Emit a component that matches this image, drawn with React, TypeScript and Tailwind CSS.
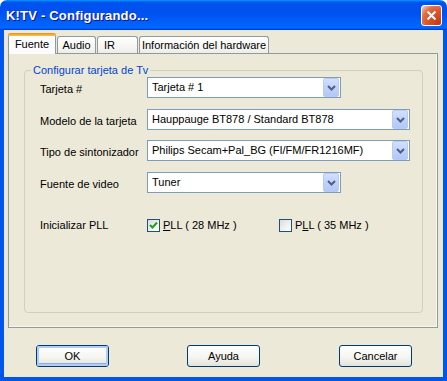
import React from 'react';

const font = "font-['Liberation_Sans',Arial,sans-serif]";

function ComboArrow() {
    return (
        <div className="ml-auto mr-[1px] h-full w-[16px] rounded-[2px] border border-[#B9CBF3] bg-[linear-gradient(180deg,#D3E0FD_0%,#C0D2FB_50%,#B3C8F6_100%)] flex items-center justify-center">
            <svg width="9" height="6" viewBox="0 0 9 6">
                <path d="M1 1 L4.5 4.5 L8 1" fill="none" stroke="#4D6185" strokeWidth="2" />
            </svg>
        </div>
    );
}

function Combo({ value, width }: { value: string; width: string }) {
    return (
        <div className={`${width} h-[21px] border border-[#7F9DB9] bg-white flex items-center`}>
            <span className="pl-[4px] whitespace-nowrap">{value}</span>
            <ComboArrow />
        </div>
    );
}

function Checkbox({ checked }: { checked?: boolean }) {
    return (
        <div className="w-[13px] h-[13px] border border-[#1C5180] bg-[linear-gradient(135deg,#DCDCD7_0%,#F2F2EE_60%,#FFFFFF_100%)] flex items-center justify-center">
            {checked && (
                <svg width="9" height="9" viewBox="0 0 9 9">
                    <path d="M1 4 L3.5 6.5 L8 1.5" fill="none" stroke="#21A121" strokeWidth="2" />
                </svg>
            )}
        </div>
    );
}

function Button({ label, focused }: { label: string; focused?: boolean }) {
    return (
        <div className="w-[73px] h-[22px] rounded-[3px] border border-[#003C74] bg-[linear-gradient(180deg,#FFFFFF_0%,#F4F4F0_60%,#E3E2DA_100%)] flex items-center justify-center">
            <div
                className={`w-full h-full rounded-[2px] flex items-center justify-center ${
                    focused ? 'shadow-[inset_0_0_0_2px_#B3CCF5,inset_0_-1px_0_2px_#8AABE3]' : ''
                }`}
            >
                {label}
            </div>
        </div>
    );
}

const rows = [
    { label: 'Tarjeta #', value: 'Tarjeta # 1', width: 'w-[194px]', mt: 'mt-0' },
    { label: 'Modelo de la tarjeta', value: 'Hauppauge BT878 / Standard BT878', width: 'w-[263px]', mt: 'mt-[11px]' },
    { label: 'Tipo de sintonizador', value: 'Philips Secam+Pal_BG (FI/FM/FR1216MF)', width: 'w-[263px]', mt: 'mt-[10px]' },
    { label: 'Fuente de video', value: 'Tuner', width: 'w-[194px]', mt: 'mt-[11px]' },
];

export default function App() {
    return (
        <div className={`w-[447px] h-[381px] flex flex-col bg-white text-[11px] leading-[13px] text-black ${font}`}>
            {/* Title bar */}
            <div className="h-[30px] shrink-0 rounded-t-[7px] bg-[linear-gradient(180deg,#0997FF,#0053EE_8%,#0050EE_40%,#0066FF_88%,#0066FF_93%,#005BFF_95%,#003DD7_96%,#003DD7)] flex items-center pl-[6px] pr-[5px]">
                <span className="text-white font-bold text-[13px] tracking-[0.2px] [text-shadow:1px_1px_#0F1089]">
                    K!TV - Configurando...
                </span>
                <div className="ml-auto w-[21px] h-[21px] rounded-[3px] border border-white bg-[radial-gradient(circle_at_90%_90%,#C23A10_0%,#DD5A30_55%,#E2704A_72%,#F4B8A2_92%,#FFFFFF_100%)] flex items-center justify-center">
                    <svg width="11" height="11" viewBox="0 0 11 11">
                        <path d="M1.5 1.5 L9.5 9.5 M9.5 1.5 L1.5 9.5" stroke="white" strokeWidth="2" />
                    </svg>
                </div>
            </div>

            {/* Body */}
            <div className="flex-1 flex flex-col bg-[#ECE9D8] border-x-4 border-b-4 border-[#0055EA] pt-[3px] pl-[4px]">
                {/* Tabs */}
                <div className="flex items-end h-[21px]">
                    <div className="relative z-10 w-[48px] h-[21px] rounded-t-[3px] border-x border-[#919B9C] bg-[#FCFCFE] flex flex-col">
                        <div className="h-[3px] rounded-t-[3px] bg-[linear-gradient(180deg,#E68B2C,#FFC73C)] -mx-[1px]" />
                        <div className="flex-1 flex items-center justify-center pb-[2px]">Fuente</div>
                    </div>
                    <div className="ml-[1px] w-[39px] h-[18px] rounded-t-[3px] border-x border-t border-[#919B9C] bg-[linear-gradient(180deg,#FFFFFF,#F3F3EF_70%,#ECEBE5)] flex items-center justify-center pb-[1px]">
                        Audio
                    </div>
                    <div className="ml-[1px] w-[41px] h-[18px] rounded-t-[3px] border-x border-t border-[#919B9C] bg-[linear-gradient(180deg,#FFFFFF,#F3F3EF_70%,#ECEBE5)] flex items-center pl-[6px] pb-[1px]">
                        IR
                    </div>
                    <div className="ml-[1px] w-[130px] h-[18px] rounded-t-[3px] border-x border-t border-[#919B9C] bg-[linear-gradient(180deg,#FFFFFF,#F3F3EF_70%,#ECEBE5)] flex items-center justify-center pb-[1px]">
                        Información del hardware
                    </div>
                </div>

                {/* Panel */}
                <div className="-mt-[1px] w-[430px] h-[275px] border border-[#919B9C] bg-[#ECE9D8] shadow-[inset_-1px_-1px_0_#F7F6F0]">
                    <fieldset className="ml-[15px] mt-[10px] w-[399px] h-[249px] rounded-[4px] border border-[#D0D0BF] pl-[6px]">
                        <legend className="px-[2px] text-[#0046D5] leading-[13px]">Configurar tarjeta de Tv</legend>
                        <div className="pl-[9px] flex flex-col">
                            {rows.map(r => (
                                <div key={r.label} className={`${r.mt} flex items-center h-[21px]`}>
                                    <span className="w-[107px] pt-[4px]">{r.label}</span>
                                    <Combo value={r.value} width={r.width} />
                                </div>
                            ))}
                            <div className="mt-[26px] flex items-center h-[13px]">
                                <span className="w-[107px]">Inicializar PLL</span>
                                <div className="w-[132px] flex items-center">
                                    <Checkbox checked />
                                    <span className="ml-[3px]">
                                        <span className="underline">P</span>LL ( 28 MHz )
                                    </span>
                                </div>
                                <div className="flex items-center">
                                    <Checkbox />
                                    <span className="ml-[3px]">
                                        P<span className="underline">L</span>L ( 35 MHz )
                                    </span>
                                </div>
                            </div>
                        </div>
                    </fieldset>
                </div>

                {/* Buttons */}
                <div className="mt-[17px] flex pl-[28px]">
                    <Button label="OK" focused />
                    <div className="ml-[78px]">
                        <Button label="Ayuda" />
                    </div>
                    <div className="ml-[79px]">
                        <Button label="Cancelar" />
                    </div>
                </div>
            </div>
        </div>
    );
}
